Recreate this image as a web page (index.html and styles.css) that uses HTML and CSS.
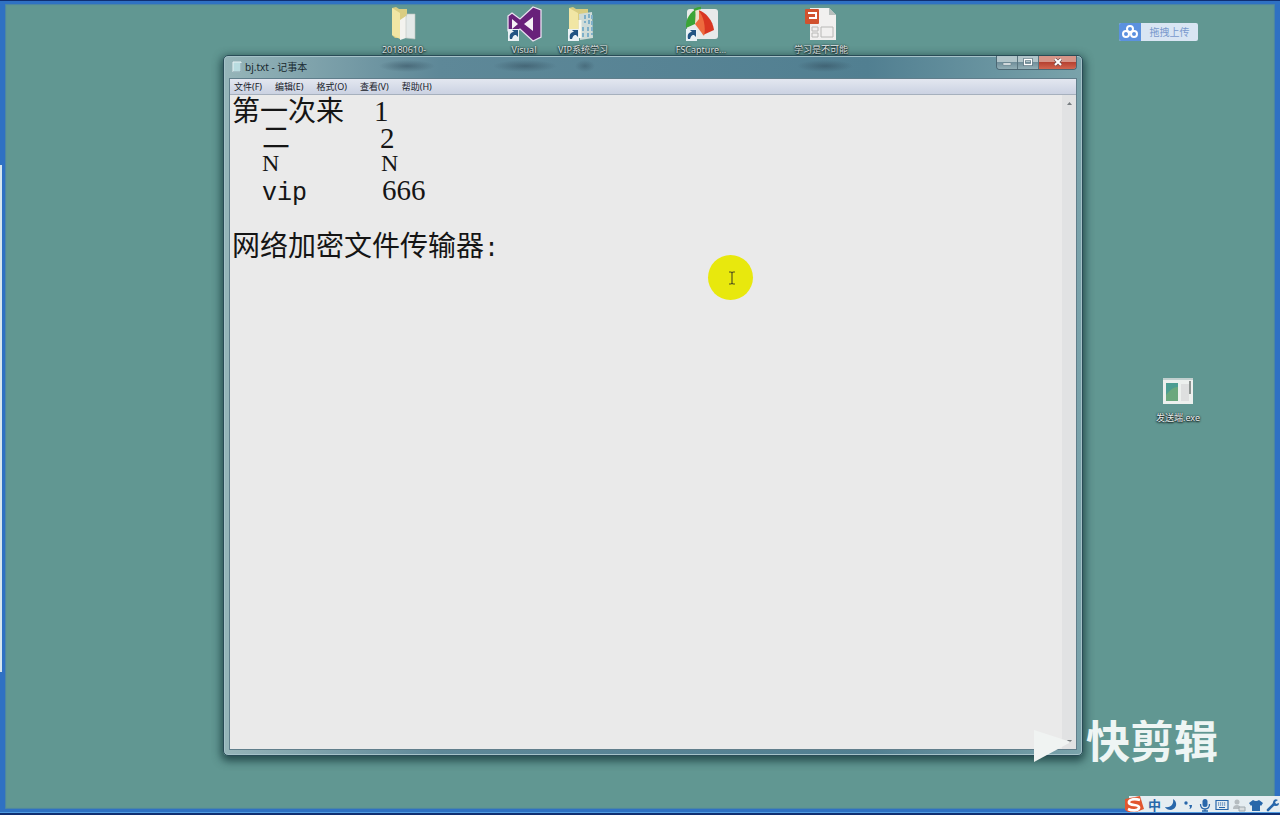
FILE: index.html
```html
<!DOCTYPE html>
<html lang="zh-CN">
<head>
<meta charset="utf-8">
<title>bj.txt - 记事本</title>
<link rel="stylesheet" href="styles.css">
</head>
<body>
<main class="desktop">
  <div class="edge"></div>
  <a class="shortcut folder" href="#">
    <svg width="34" height="36" viewBox="0 0 34 36"><path d="M5 2l4-1 3 2h8v29H8l-3-3z" fill="#d9cd82"/><path d="M5 2l8 5v26l-8-4z" fill="#f1e6a4"/><path d="M13 14l6-4v22l-6 2z" fill="#f3f3ef"/><path d="M20 8h8v25l-9-1V11z" fill="#e3e9e8" stroke="#bcc5bd" stroke-width=".6"/></svg>
    <span>20180610-</span>
  </a>
  <a class="shortcut visual" href="#">
    <svg width="36" height="36" viewBox="0 0 36 36"><path d="M2 10l4-3 8 6L27 1l8 3v27l-8 4-13-12-7 5-5-3z" fill="#68217a" stroke="#eadff0" stroke-width="1.300"/><path d="M6 13v10l6-5zM18 18l9-7v14z" fill="#f5f1f6"/><path d="M2 23h11v12H2z" fill="#e9f1f5"/><path d="M4 33c-1-5 1-7 4-7l-2-2h6v7l-2-2c-3 0-3 2-4 4z" fill="#225483"/></svg>
    <span>Visual</span>
  </a>
  <a class="shortcut vip" href="#">
    <svg width="36" height="36" viewBox="0 0 36 36"><path d="M4 2l4-1 3 2h12v29H4z" fill="#d9cd82"/><path d="M4 2l9 5v26l-9-4z" fill="#f1e6a4"/><path d="M14 8l13-2 1 26-13 2z" fill="#cedbd8"/><path d="M20 9v8m4-9v10m3-9v20m-9-8v12m5-12v12" stroke="#7fb0c9" stroke-width="2" stroke-dasharray="4 2"/><path d="M15 14v18" stroke="#faf8ed" stroke-width="3"/><path d="M3 23h11v12H3z" fill="#e9f1f5"/><path d="M5 33c-1-5 1-7 4-7l-2-2h6v7l-2-2c-3 0-3 2-4 4z" fill="#225483"/></svg>
    <span>VIP系统学习</span>
  </a>
  <a class="shortcut capture" href="#">
    <svg width="36" height="36" viewBox="0 0 36 36"><rect x="4" y="3" width="31" height="30" rx="3" fill="#e8eaea"/><path d="M14 3C8 5 2 13 3 22l9-4 3-13z" fill="#3aa536"/><path d="M15 4c8 2 15 11 16 20l-11 5z" fill="#d93622"/><path d="M15 4c-2 5-3 9-3 14l9 12c2-8 0-20-6-26z" fill="#ed6b3e"/><path d="M12 4q1 3 0 14l4-5 0-9z" fill="#e9e1cb"/><path d="M11 4q4-2 7-2" stroke="#3aa536" stroke-width="2.500" fill="none"/><path d="M3 23h11v12H3z" fill="#e9f1f5"/><path d="M5 33c-1-5 1-7 4-7l-2-2h6v7l-2-2c-3 0-3 2-4 4z" fill="#225483"/></svg>
    <span>FSCapture...</span>
  </a>
  <a class="shortcut study" href="#">
    <svg width="36" height="36" viewBox="0 0 36 36"><path d="M7 2h19l7 7v25H7z" fill="#f1f0ef"/><path d="M26 2v7h7z" fill="#b8bfbd"/><rect x="2" y="3" width="14" height="15" rx="1" fill="#d1522f"/><path d="M5 7h8v5H6" fill="none" stroke="#fff" stroke-width="2"/><path d="M9 21h6v4H9zm0 6h6v4H9zm9-6h12v10H18z" fill="none" stroke="#b8b8b6"/></svg>
    <span>学习是不可能</span>
  </a>
  <a class="shortcut sender" href="#">
    <svg width="32" height="36" viewBox="0 0 32 36"><path d="M1 8h30v25H1z" fill="#edf0ee"/><path d="M1 8h30" stroke="#c2d0cf" stroke-width="2"/><path d="M4 12h12v18H4z" fill="#4d9d92"/><path d="M4 24q7-9 12-8v14H4z" fill="#6ba87d"/><path d="M19 13h8v17h-8z" fill="#dedfdf"/><path d="M28 10v13" stroke="#8d9391" stroke-width="2"/></svg>
    <span>发送端.exe</span>
  </a>
  <button class="upload" type="button">
    <span class="upload-icon"><svg width="18" height="16" viewBox="0 0 18 16" fill="none" stroke="#fff" stroke-width="2"><circle cx="9" cy="5" r="3"/><circle cx="5" cy="10" r="3"/><circle cx="13" cy="10" r="3"/></svg></span>
    <span class="upload-label">拖拽上传</span>
  </button>

  <section class="window">
    <header class="titlebar">
      <svg class="file-icon" width="10" height="12" viewBox="0 0 10 12"><path d="M1 1h8v10H1z" fill="#b9dce0" stroke="#e7f1f3"/><path d="M1 11h8V2" fill="none" stroke="#72949e"/></svg>
      <h1>bj.txt - 记事本</h1>
      <div class="controls">
        <button type="button" aria-label="最小化"><svg width="12" height="9" viewBox="0 0 12 9"><path d="M2 5h8v2H2z" fill="#fff" stroke="#667d87" stroke-width=".6"/></svg></button>
        <button type="button" aria-label="最大化"><svg width="12" height="9" viewBox="0 0 12 9"><path d="M2.500 1.500h7v5h-7z" fill="none" stroke="#4e6774" stroke-width="2.600"/><path d="M2.500 1.500h7v5h-7z" fill="none" stroke="#fff" stroke-width="1.300"/></svg></button>
        <button type="button" class="close" aria-label="关闭"><svg width="12" height="9" viewBox="0 0 12 9"><path d="M3 1l6 6M9 1L3 7" stroke="#704e50" stroke-width="3.400"/><path d="M3 1l6 6M9 1L3 7" stroke="#fff" stroke-width="2"/></svg></button>
      </div>
    </header>
    <div class="client">
      <nav class="menu">
        <button type="button">文件(F)</button>
        <button type="button">编辑(E)</button>
        <button type="button">格式(O)</button>
        <button type="button">查看(V)</button>
        <button type="button">帮助(H)</button>
      </nav>
      <div class="editor">
        <div class="text" role="textbox" aria-multiline="true" aria-label="文本" contenteditable="true" spellcheck="false"><div><span class="han">第一次来</span>  <span class="num">1</span></div><div>  <span class="han">二</span>      <span class="num">2</span></div><div>  <span class="cap">N</span>       <span class="cap">N</span></div><div>  vip     <span class="num">666</span></div><div><br></div><div><span class="han">网络加密文件传输器</span>:</div></div>
        <div class="scroll">
          <svg width="7" height="5" viewBox="0 0 7 5"><path d="M1 4l2.500-3L6 4z" fill="#777d80"/></svg>
          <svg width="7" height="5" viewBox="0 0 7 5"><path d="M1 1l2.500 3L6 1z" fill="#777d80"/></svg>
        </div>
      </div>
    </div>
  </section>

  <div class="pointer"><svg width="8" height="14" viewBox="0 0 8 14"><path d="M1 1h2l1 1 1-1h2M4 2v10M1 13h2l1-1 1 1h2" fill="none" stroke="#55551c" stroke-width="1.200"/></svg></div>

  <div class="watermark">
    <svg width="38" height="34" viewBox="0 0 38 34"><path d="M0 1l37 12L0 33z" fill="#f0f3f2"/></svg>
    <span>快剪辑</span>
  </div>

  <div class="tray">
    <svg class="sogou" width="22" height="20" viewBox="0 0 22 20"><path d="M2 4l15-3 4 13-13 5-6-4z" fill="#e2562f"/><path d="M17 5C10 3 5 5 6 8s11 1 10 5c-1 3-7 3-11 1" fill="none" stroke="#fff" stroke-width="2.600"/></svg>
    <span class="lang">中</span>
    <svg width="14" height="14" viewBox="0 0 14 14"><path d="M9 1c5 3 4 10-2 11-3 0-5-1-6-3 6 1 9-3 8-8z" fill="#2867aa"/></svg>
    <svg width="14" height="14" viewBox="0 0 14 14"><circle cx="5" cy="5" r="1.700" fill="#2867aa"/><path d="M8 7h3q0 4-3 4 2-1 0-4z" fill="#2867aa"/></svg>
    <svg width="14" height="14" viewBox="0 0 14 14"><rect x="4.500" y="1" width="5" height="8" rx="2.500" fill="#2867aa"/><path d="M2.500 6q0 5 4.500 5t4.500-5M7 11v2M4 13h6" fill="none" stroke="#2867aa" stroke-width="1.300"/></svg>
    <svg width="14" height="14" viewBox="0 0 14 14"><path d="M1 2.500h12v9H1z" fill="none" stroke="#2867aa" stroke-width="1.200"/><path d="M3 5h8M3 7h8" stroke="#2867aa" stroke-width="1.200" stroke-dasharray="1.200 .8"/><path d="M4 9.500h6" stroke="#2867aa"/></svg>
    <svg width="14" height="14" viewBox="0 0 14 14"><circle cx="5" cy="4" r="2.500" fill="#b5bcc0"/><path d="M1 11q0-4 4-4 3 0 4 4z" fill="#b5bcc0"/><path d="M7 9h6v4H7z" fill="#d8dcdd" stroke="#a0aab0"/></svg>
    <svg width="14" height="14" viewBox="0 0 14 14"><path d="M4 2q3 2 6 0l4 3-2 3-1-1v6H3V7L2 8 0 5z" fill="#2867aa"/></svg>
    <svg width="14" height="14" viewBox="0 0 14 14"><path d="M2 12l6-6" stroke="#2867aa" stroke-width="2.600" stroke-linecap="round"/><path d="M12 2q-4-2-5 2-1 4 3 4 3 0 3-3l-3 1-1-2z" fill="#2867aa"/></svg>
  </div>
</main>
</body>
</html>
```
FILE: styles.css
```css
* { box-sizing: border-box; }

body {
  margin: 0;
  overflow: hidden;
  font-family: "Noto Sans", "Noto Sans CJK SC", sans-serif;
}

svg { display: block; flex: none; }

button {
  margin: 0;
  padding: 0;
  border: 0;
  background: none;
  color: inherit;
  font: inherit;
}

.desktop {
  position: relative;
  height: 100vh;
  background: #619792;
  border: 5px solid #2f71c3;
  border-top-width: 4px;
  border-bottom-width: 6px;
  box-shadow: inset 0 0 1px 1px #4b84a6;
}

.desktop::before,
.desktop::after {
  content: "";
  position: absolute;
  left: -5px;
  right: -5px;
  background: #102f72;
}

.desktop::before { top: -4px; height: 1px; }

.desktop::after {
  bottom: -6px;
  height: 2px;
  border-top: 1px solid #4f9be0;
}

.edge {
  position: absolute;
  left: -5px;
  top: 20%;
  bottom: 17%;
  width: 2px;
  background: #d7e6ee;
}

.shortcut {
  position: absolute;
  top: 2px;
  width: 70px;
  display: flex;
  flex-direction: column;
  align-items: center;
  gap: 2px;
  color: #e8eeee;
  font-size: 9px;
  line-height: 12px;
  text-decoration: none;
  text-shadow: 0 1px 2px #000, 0 0 2px #102020;
  white-space: nowrap;
}

.folder { left: 364px; }
.visual { left: 484px; }
.vip { left: 543px; }
.capture { left: 661px; }
.study { left: 781px; }
.sender { left: 1138px; top: 367px; gap: 5px; }

.upload {
  position: absolute;
  left: 1114px;
  top: 19px;
  display: flex;
  height: 18px;
  overflow: hidden;
  border-radius: 2px;
  background: #d9e5f3;
  color: #7898cc;
  font-size: 10px;
}

.upload-icon {
  display: flex;
  align-items: center;
  justify-content: center;
  width: 22px;
  height: 18px;
  background: #5b91df;
}

.upload-label { width: 57px; line-height: 18px; }

.window {
  position: absolute;
  top: 51px;
  right: 192px;
  bottom: 53px;
  left: 218px;
  display: flex;
  flex-direction: column;
  padding: 0 5px 5px;
  border: 1px solid #294c57;
  border-radius: 5px;
  background: linear-gradient(90deg, #96b5b9 0, #5e8898 25%, #517f91 75%, #7aa3ab 100%);
  box-shadow: inset 0 0 0 1px #a5c2c8, 0 3px 9px 2px #173a3dd0;
}

/* Blurred desktop labels showing through the glass frame */
.titlebar {
  display: flex;
  align-items: center;
  height: 22px;
  padding-left: 3px;
  background:
    radial-gradient(28px 6px at 178px 10px, #344f5f90, transparent),
    radial-gradient(32px 6px at 296px 10px, #344f5f90, transparent),
    radial-gradient(10px 6px at 356px 10px, #344f5f70, transparent),
    radial-gradient(28px 6px at 596px 10px, #344f5f90, transparent);
}

.titlebar h1 {
  flex: 1;
  margin: 0 0 0 3px;
  color: #16272d;
  font-size: 10px;
  font-weight: 400;
  line-height: 20px;
}

.controls {
  display: flex;
  align-self: flex-start;
  height: 14px;
  border: 1px solid #4c6773;
  border-top: 0;
  border-radius: 0 0 4px 4px;
  overflow: hidden;
}

.controls button {
  display: flex;
  align-items: center;
  justify-content: center;
  width: 21px;
  border-right: 1px solid #59747e;
  background: linear-gradient(#b2c5ca 0 45%, #718f9b 50%, #93afb6);
}

.controls .close {
  width: 37px;
  border: 0;
  background: linear-gradient(#d69588 0 45%, #b74231 50%, #d26650);
}

.client {
  display: flex;
  flex: 1;
  flex-direction: column;
  min-height: 0;
  border: 1px solid #607e8b;
  background: #eaeaea;
}

.menu {
  display: flex;
  gap: 13px;
  height: 16px;
  padding-left: 4px;
  border-bottom: 1px solid #a6b0bd;
  background: linear-gradient(#e3e7f0, #cbd2e2);
  color: #172029;
  font-size: 9px;
  line-height: 14px;
}

.editor { display: flex; flex: 1; min-height: 0; }

.text {
  flex: 1;
  padding: 1px 2px;
  color: #151515;
  font-family: "Liberation Mono", "Noto Sans CJK SC", monospace;
  font-size: 25px;
  white-space: pre;
  outline: 0;
}

.text div { height: 27px; line-height: 27px; }

.han { font-family: "Noto Sans CJK SC", sans-serif; font-size: 28px; }
.num { font-family: "Liberation Serif", serif; font-size: 29px; }

.cap {
  display: inline-block;
  width: 14px;
  font-family: "Liberation Serif", serif;
  font-size: 24px;
}

.scroll {
  display: flex;
  flex-direction: column;
  align-items: center;
  justify-content: space-between;
  width: 14px;
  padding: 6px 0 5px;
  background: #e1e2e3;
}

.pointer {
  position: absolute;
  left: 703px;
  top: 251px;
  display: flex;
  align-items: center;
  justify-content: center;
  width: 45px;
  height: 45px;
  padding-left: 3px;
  border-radius: 50%;
  background: #e8e80d;
}

.watermark {
  position: absolute;
  right: 57px;
  bottom: 46px;
  display: flex;
  align-items: flex-end;
  gap: 14px;
  color: #eef5f4;
  font-family: "Noto Sans CJK SC", sans-serif;
  font-size: 44px;
  font-weight: 700;
  line-height: 48px;
}

.tray {
  position: absolute;
  right: -5px;
  bottom: -5px;
  display: flex;
  align-items: center;
  gap: 3px;
  height: 18px;
  background: #e5edf1;
}

.sogou { margin-left: -6px; }

.lang {
  color: #2867aa;
  font-family: "Noto Sans CJK SC", sans-serif;
  font-size: 13px;
  font-weight: 700;
  line-height: 18px;
}
```
